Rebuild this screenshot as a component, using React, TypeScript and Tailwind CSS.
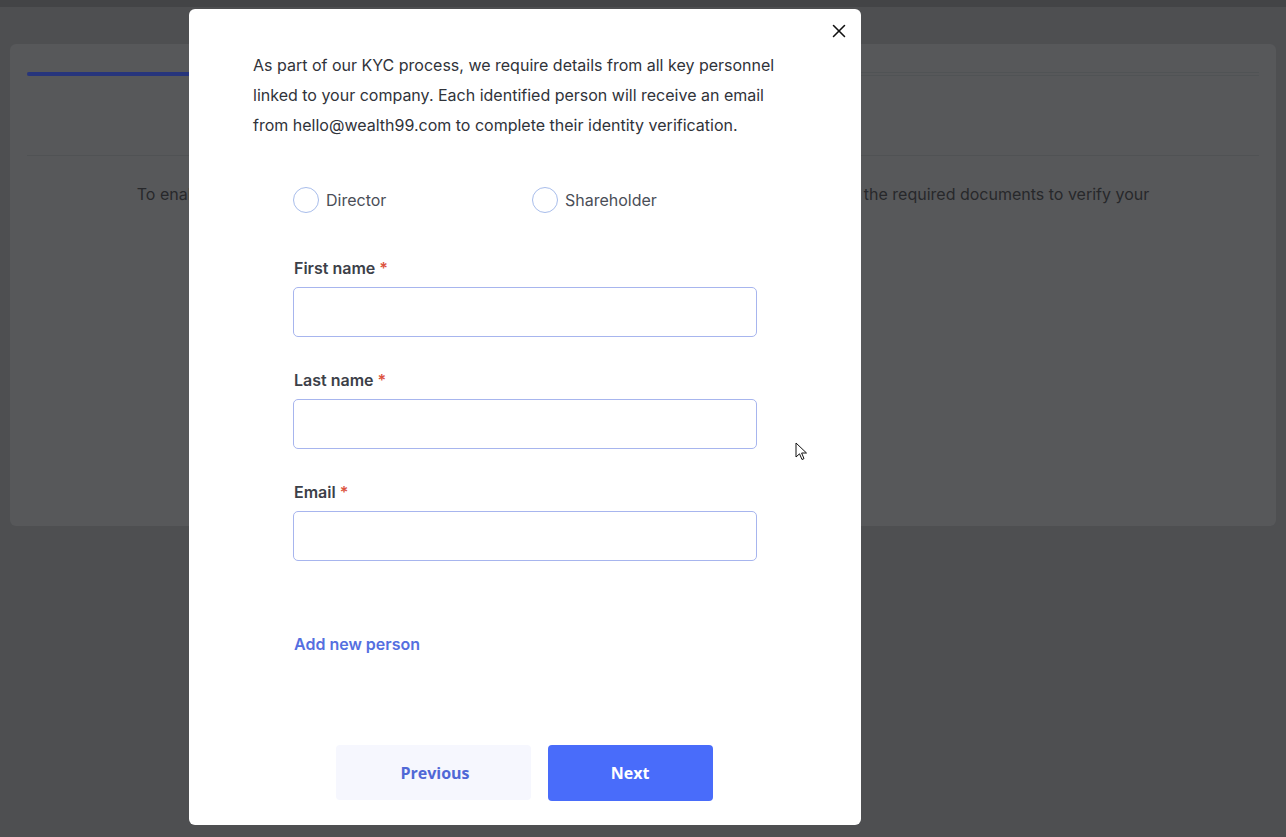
import { X } from "lucide-react";

const inter = { fontFamily: "Inter, 'Noto Sans', sans-serif" };

function Field({ label }: { label: string }) {
  return (
    <div className="flex flex-col">
      <label className="mb-[7px] pl-px text-[16px] leading-6 font-semibold text-[#3c4048]">
        {label} <span className="text-[#dc5440]">*</span>
      </label>
      <input
        type="text"
        className="h-[50px] w-full rounded-[5px] border border-[#a7b5ee] bg-white px-3 outline-none"
      />
    </div>
  );
}

function Radio({ label, className }: { label: string; className?: string }) {
  return (
    <div className={`flex items-center gap-[7px] ${className ?? ""}`}>
      <span className="h-[26px] w-[26px] shrink-0 rounded-full border border-[#a8bdeb] bg-white" />
      <span className="text-[16px] leading-6 text-[#4a4e57]">{label}</span>
    </div>
  );
}

function Cursor() {
  return (
    <svg
      className="absolute left-[795px] top-[442px]"
      width="13"
      height="20"
      viewBox="0 0 13 20"
    >
      <path
        d="M1 1 L1 15 L4.5 11.8 L7 17.5 L9 16.6 L6.6 11 L11.5 11 Z"
        fill="white"
        stroke="#111"
        strokeWidth="1"
        strokeLinejoin="round"
      />
    </svg>
  );
}

export default function App() {
  return (
    <div className="relative h-[837px] w-full overflow-hidden bg-[#4e4f51]" style={inter}>
      <div className="h-[7px] bg-[#434446]" />

      {/* page behind the dialog */}
      <div className="mx-[10px] mt-[37px] h-[482px] rounded-[6px] bg-[#57585a] px-[17px] pt-[28px]">
        <div className="relative h-[4px] border-y border-[#505355]">
          <div className="absolute -top-px left-0 h-[4px] w-[260px] rounded-full bg-[#27357c]" />
        </div>
        <div className="mt-[79px] h-px bg-[#505254]" />
        <p className="mt-[26px] text-center text-[16px] leading-6 text-[#27282b]">
          To enable us to complete your company's onboarding and activate your account, please upload the required documents to verify your
        </p>
      </div>

      {/* dialog */}
      <div className="absolute left-[189px] top-[9px] h-[816px] w-[672px] rounded-[6px] bg-white px-16 pt-[41px]">
        <button className="absolute right-[7px] top-[7px] p-1 text-[#111]">
          <X size={22} strokeWidth={1.7} />
        </button>

        <p className="text-[16px] leading-[30px] text-[#30333a]">
          As part of our KYC process, we require details from all key personnel linked to your company. Each identified person will receive an email from hello@wealth99.com to complete their identity verification.
        </p>

        <div className="px-10">
          <div className="mt-[47px] flex">
            <Radio label="Director" className="w-[239px]" />
            <Radio label="Shareholder" />
          </div>

          <div className="mt-[43px] flex flex-col gap-[31px]">
            <Field label="First name" />
            <Field label="Last name" />
            <Field label="Email" />
          </div>

          <button className="mt-[71px] pl-px text-[16px] leading-6 font-semibold text-[#556fe0]">
            Add new person
          </button>
        </div>

        <div
          className="mt-[89px] flex justify-center gap-[17px] pr-[2px]"
          style={{ fontFamily: "'Open Sans', 'Noto Sans', sans-serif" }}
        >
          <button className="h-[55px] w-[195px] rounded-[4px] bg-[#f6f7fe] pl-[4px] text-[16px] font-bold text-[#5068d6]">
            Previous
          </button>
          <button className="h-[56px] w-[165px] rounded-[4px] bg-[#496cfa] text-[16px] font-bold text-white">
            Next
          </button>
        </div>
      </div>

      <Cursor />
    </div>
  );
}
